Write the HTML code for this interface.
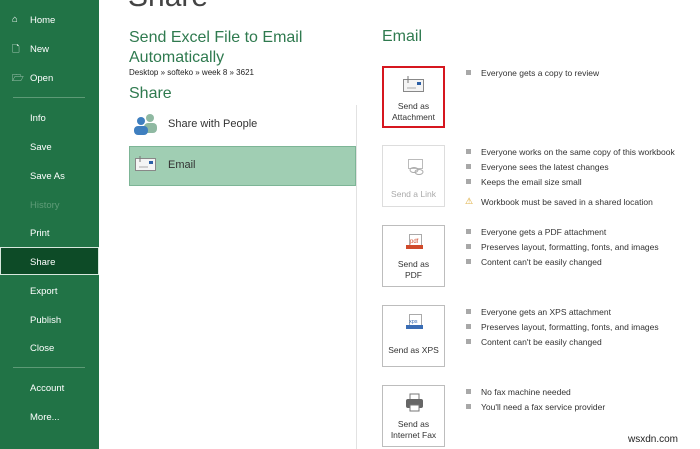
<!DOCTYPE html>
<html><head><meta charset="utf-8"><style>
*{margin:0;padding:0;box-sizing:border-box}
body{width:700px;height:449px;overflow:hidden;background:#fff;font-family:"Liberation Sans",sans-serif;position:relative}
.side{position:absolute;left:0;top:0;width:99px;height:449px;background:#217346;color:#fff;font-size:9.5px}
.side div{position:absolute;left:30px}
.side .ico{left:12px}
.side .hr{position:absolute;left:13px;width:72px;height:1px;background:#5d9a76}
.sel{position:absolute;left:0;top:247px;width:99px;height:28px;background:#0d4b27;border:1px solid #d8e8de}
.a{position:absolute}
.g{color:#2f7a4f}
.btn{position:absolute;left:382px;width:63px;height:62px;border:1px solid #bdbdbd;font-size:8.5px;text-align:center;color:#333;line-height:11px}
.li{position:absolute;left:466px;font-size:8.5px;color:#333}
.li::before{content:"";position:absolute;left:0;top:2px;width:5px;height:5px;background:#a8a8a8}
.li span{position:absolute;left:15px;white-space:nowrap}
</style></head><body>
<div class="side">
<div class="ico" style="top:14px">⌂</div><div style="top:15px">Home</div>
<div class="ico" style="top:42px">🗋</div><div style="top:44px">New</div>
<div class="ico" style="top:71px">🗁</div><div style="top:73px">Open</div>
<div class="hr" style="top:97px"></div>
<div style="top:113px">Info</div>
<div style="top:142px">Save</div>
<div style="top:171px">Save As</div>
<div style="top:200px;color:#5f9c78">History</div>
<div style="top:228px">Print</div>
</div>
<div class="sel"></div>
<div class="a" style="left:30px;top:257px;color:#fff;font-size:9.5px">Share</div>
<div class="side" style="background:none;width:99px">
<div style="top:286px">Export</div>
<div style="top:315px">Publish</div>
<div style="top:343px">Close</div>
<div class="hr" style="top:367px"></div>
<div style="top:383px">Account</div>
<div style="top:412px">More...</div>
</div>
<div class="a" style="left:128px;top:-20px;font-size:30px;color:#444">Share</div>
<div class="a g" style="left:129px;top:28px;font-size:16px;line-height:20px">Send Excel File to Email<br>Automatically</div>
<div class="a" style="left:129px;top:68px;font-size:8px;color:#222">Desktop » softeko » week 8 » 3621</div>
<div class="a g" style="left:129px;top:85px;font-size:16px">Share</div>
<svg class="a" style="left:133px;top:113px" width="26" height="22"><circle cx="17" cy="5" r="4" fill="#8fb9a2"/><rect x="11" y="10" width="13" height="10" rx="4" fill="#8fb9a2"/><circle cx="8" cy="8" r="4" fill="#3f7fbf"/><rect x="1" y="13" width="14" height="9" rx="4" fill="#3f7fbf"/></svg>
<div class="a" style="left:168px;top:118px;font-size:11px;color:#333">Share with People</div>
<div class="a" style="left:129px;top:146px;width:227px;height:40px;background:#a0ceb3;border:1px solid #7db596"></div>
<svg class="a" style="left:134px;top:153px" width="24" height="20"><rect x="1.5" y="5.5" width="20" height="12" fill="#f4f4f4" stroke="#888"/><rect x="15" y="8" width="4" height="3" fill="#2b5fa6"/><path d="M6 3v6" stroke="#777" fill="none"/><line x1="5" y1="14" x2="14" y2="14" stroke="#aaa"/></svg>
<div class="a" style="left:168px;top:159px;font-size:11px;color:#333">Email</div>
<div class="a" style="left:356px;top:105px;width:1px;height:344px;background:#e2e2e2"></div>
<div class="a g" style="left:382px;top:28px;font-size:16px">Email</div>

<div class="btn" style="top:66px;border:2px solid #d6161f"><svg width="24" height="20" style="margin-top:6px"><rect x="1.5" y="5.5" width="20" height="12" fill="#f4f4f4" stroke="#888"/><rect x="15" y="8" width="4" height="3" fill="#2b5fa6"/><path d="M6 2v7" stroke="#777"/><line x1="5" y1="14" x2="14" y2="14" stroke="#aaa"/></svg><div style="margin-top:4px">Send as<br>Attachment</div></div>
<div class="btn" style="top:145px;border-color:#ddd;color:#aaa"><svg width="24" height="20" style="margin-top:10px"><rect x="6.5" y="3.5" width="14" height="9" fill="none" stroke="#bbb"/><ellipse cx="12" cy="14" rx="4" ry="2.5" fill="none" stroke="#aaa"/><ellipse cx="17" cy="16" rx="4" ry="2.5" fill="none" stroke="#aaa"/></svg><div style="margin-top:10px">Send a Link</div></div>
<div class="btn" style="top:225px"><svg width="24" height="22" style="margin-top:6px"><rect x="7.5" y="2.5" width="12" height="14" fill="#fff" stroke="#aaa"/><text x="8" y="11" font-size="6" fill="#d04a2b" font-family="Liberation Sans">pdf</text><rect x="4" y="13" width="17" height="4" fill="#d04a2b"/></svg><div style="margin-top:2px">Send as<br>PDF</div></div>
<div class="btn" style="top:305px"><svg width="24" height="22" style="margin-top:6px"><rect x="7.5" y="2.5" width="12" height="14" fill="#fff" stroke="#aaa"/><text x="7" y="11" font-size="5.5" fill="#3a6db5" font-family="Liberation Sans">xps</text><rect x="4" y="13" width="17" height="4" fill="#3a6db5"/></svg><div style="margin-top:8px">Send as XPS</div></div>
<div class="btn" style="top:385px"><svg width="24" height="22" style="margin-top:6px"><rect x="8" y="2" width="9" height="6" fill="#fff" stroke="#777"/><rect x="4" y="7" width="17" height="9" rx="2" fill="#666"/><rect x="8" y="13" width="9" height="6" fill="#fff" stroke="#777"/></svg><div style="margin-top:2px">Send as<br>Internet Fax</div></div>

<div class="li" style="top:68px"><span>Everyone gets a copy to review</span></div>
<div class="li" style="top:147px"><span>Everyone works on the same copy of this workbook</span></div>
<div class="li" style="top:162px"><span>Everyone sees the latest changes</span></div>
<div class="li" style="top:177px"><span>Keeps the email size small</span></div>
<div class="a" style="left:465px;top:196px;font-size:9px;color:#d9a020">⚠</div>
<div class="a" style="left:481px;top:197px;font-size:8.5px;color:#333">Workbook must be saved in a shared location</div>
<div class="li" style="top:227px"><span>Everyone gets a PDF attachment</span></div>
<div class="li" style="top:242px"><span>Preserves layout, formatting, fonts, and images</span></div>
<div class="li" style="top:257px"><span>Content can't be easily changed</span></div>
<div class="li" style="top:307px"><span>Everyone gets an XPS attachment</span></div>
<div class="li" style="top:322px"><span>Preserves layout, formatting, fonts, and images</span></div>
<div class="li" style="top:337px"><span>Content can't be easily changed</span></div>
<div class="li" style="top:387px"><span>No fax machine needed</span></div>
<div class="li" style="top:402px"><span>You'll need a fax service provider</span></div>
<div class="a" style="left:628px;top:434px;font-size:10px;color:#222">wsxdn.com</div>
</body></html>
